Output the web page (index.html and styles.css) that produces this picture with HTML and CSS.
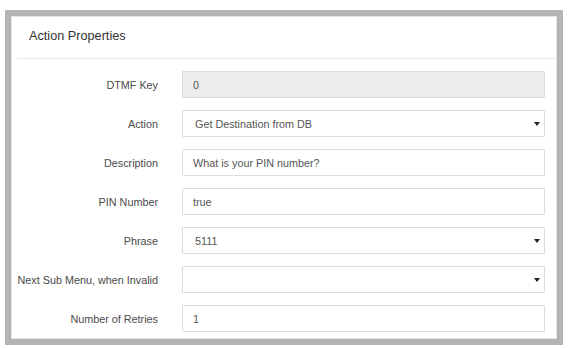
FILE: index.html
```html
<!DOCTYPE html>
<html lang="en">
<head>
  <meta charset="UTF-8" />
  <meta name="viewport" content="width=device-width, initial-scale=1.0" />
  <title>Action Properties</title>
  <link rel="stylesheet" href="styles.css">
</head>
<body>
  <div class="frame">
    <div class="panel">
      <div class="panel-heading">Action Properties</div>
      <form class="panel-body">
        <label class="label" for="dtmf">DTMF Key</label>
        <input id="dtmf" class="field" type="text" value="0" readonly>

        <label class="label" for="action">Action</label>
        <div class="select-wrap">
          <select id="action" class="field select">
            <option>Get Destination from DB</option>
          </select>
        </div>

        <label class="label" for="desc">Description</label>
        <input id="desc" class="field" type="text" value="What is your PIN number?">

        <label class="label" for="pin">PIN Number</label>
        <input id="pin" class="field" type="text" value="true">

        <label class="label" for="phrase">Phrase</label>
        <div class="select-wrap">
          <select id="phrase" class="field select">
            <option>5111</option>
          </select>
        </div>

        <label class="label" for="next">Next Sub Menu, when Invalid</label>
        <div class="select-wrap">
          <select id="next" class="field select">
            <option></option>
          </select>
        </div>

        <label class="label" for="retries">Number of Retries</label>
        <input id="retries" class="field" type="text" value="1">
      </form>
    </div>
  </div>
</body>
</html>
```

FILE: styles.css
```css
body {
  margin: 0;
  padding: 10px 5px 0 5px;
  background: #ffffff;
  font-family: "Liberation Sans", Arial, sans-serif;
  font-size: 10.8px;
  color: #333;
}
.frame {
  width: 546px;
  height: 323px;
  border: 6px solid #b4b4b4;
  background: #fff;
}
.panel {
  height: 100%;
  box-sizing: border-box;
  border: 1px solid #e4e4e4;
  background: #fff;
}
.panel-heading {
  height: 41px;
  line-height: 38px;
  margin-left: 5px;
  padding-left: 12px;
  font-size: 12.7px;
  color: #333;
  border-bottom: 1px solid #eaeaea;
}
.panel-body {
  display: grid;
  grid-template-columns: 146px 363px;
  column-gap: 24px;
  row-gap: 12px;
  padding: 12px 0 0 0;
  margin: 0;
}
.label {
  text-align: right;
  align-self: center;
  color: #4a4a4a;
}
.field {
  box-sizing: border-box;
  width: 363px;
  height: 27px;
  margin: 0;
  padding: 0 10px;
  border: 1px solid #dcdcdc;
  border-radius: 1px;
  background: #fff;
  font-family: inherit;
  font-size: 10.8px;
  color: #555;
  outline: none;
}
.field[readonly] {
  background: #ececec;
}
.select-wrap {
  position: relative;
  width: 363px;
}
.select {
  appearance: none;
  -webkit-appearance: none;
  padding-left: 12px;
}
.select-wrap::after {
  content: "";
  position: absolute;
  right: 5px;
  top: 12px;
  border-left: 3px solid transparent;
  border-right: 3px solid transparent;
  border-top: 4px solid #222;
  pointer-events: none;
}
```
